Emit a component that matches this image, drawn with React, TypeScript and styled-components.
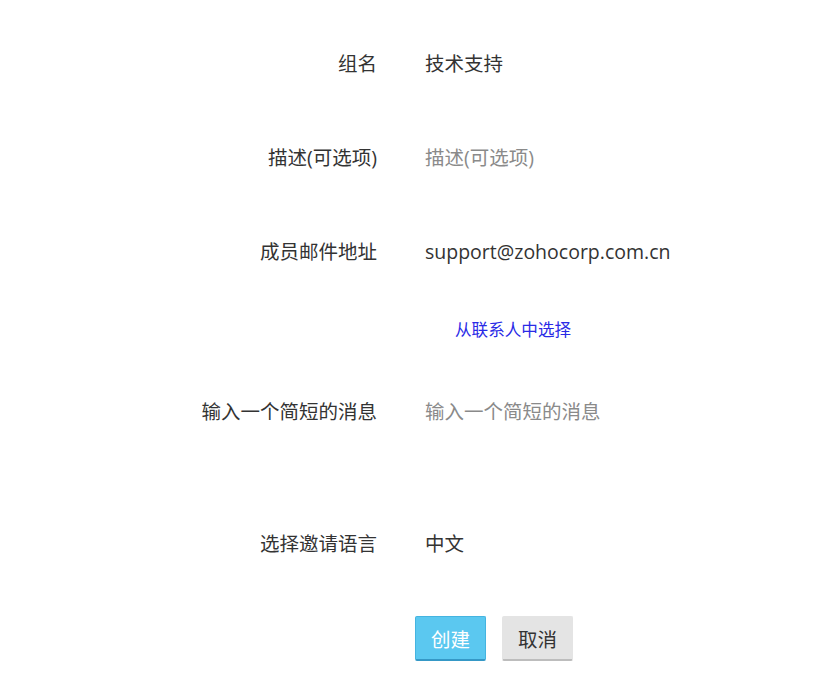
import styled, { createGlobalStyle } from "styled-components";

const GlobalStyle = createGlobalStyle`
  body {
    margin: 0;
    background: #ffffff;
    font-family: "Open Sans", "Noto Sans CJK SC", sans-serif;
    color: #333333;
  }
`;

const Form = styled.form`
  display: flex;
  flex-direction: column;
  padding-top: 52px;
  width: 826px;
`;

const Row = styled.div<{ $height: number }>`
  display: grid;
  grid-template-columns: 377px 1fr;
  column-gap: 48px;
  align-items: start;
  height: ${(p) => p.$height}px;
`;

const Label = styled.label`
  text-align: right;
  font-size: 19.5px;
  line-height: 24px;
  color: #333333;
`;

const Value = styled.div<{ $placeholder?: boolean }>`
  font-size: 19.5px;
  line-height: 24px;
  color: ${(p) => (p.$placeholder ? "#8a8a8a" : "#333333")};
`;

const ContactLink = styled.a`
  grid-column: 2;
  padding-left: 30px;
  font-size: 16.6px;
  line-height: 20px;
  color: #2a2ae6;
  text-decoration: none;
  cursor: pointer;
`;

const Actions = styled.div`
  display: flex;
  gap: 16px;
  padding-left: 415px;
`;

const Button = styled.button<{ $primary?: boolean }>`
  height: 45px;
  padding: 0 15px;
  font-family: inherit;
  font-size: 19.5px;
  border-radius: 2px;
  cursor: pointer;
  color: ${(p) => (p.$primary ? "#ffffff" : "#333333")};
  background: ${(p) => (p.$primary ? "#5bc8f0" : "#e4e4e4")};
  border: 1px solid ${(p) => (p.$primary ? "#45b4e0" : "#e4e4e4")};
  border-bottom: 2px solid ${(p) => (p.$primary ? "#3598c6" : "#bdbdbd")};
`;

export default function App() {
  return (
    <>
      <GlobalStyle />
      <Form>
        <Row $height={94}>
          <Label>组名</Label>
          <Value>技术支持</Value>
        </Row>
        <Row $height={94}>
          <Label>描述(可选项)</Label>
          <Value $placeholder>描述(可选项)</Value>
        </Row>
        <Row $height={80}>
          <Label>成员邮件地址</Label>
          <Value>support@zohocorp.com.cn</Value>
        </Row>
        <Row $height={80}>
          <ContactLink>从联系人中选择</ContactLink>
        </Row>
        <Row $height={132}>
          <Label>输入一个简短的消息</Label>
          <Value $placeholder>输入一个简短的消息</Value>
        </Row>
        <Row $height={84}>
          <Label>选择邀请语言</Label>
          <Value>中文</Value>
        </Row>
        <Actions>
          <Button type="button" $primary>
            创建
          </Button>
          <Button type="button">取消</Button>
        </Actions>
      </Form>
    </>
  );
}
